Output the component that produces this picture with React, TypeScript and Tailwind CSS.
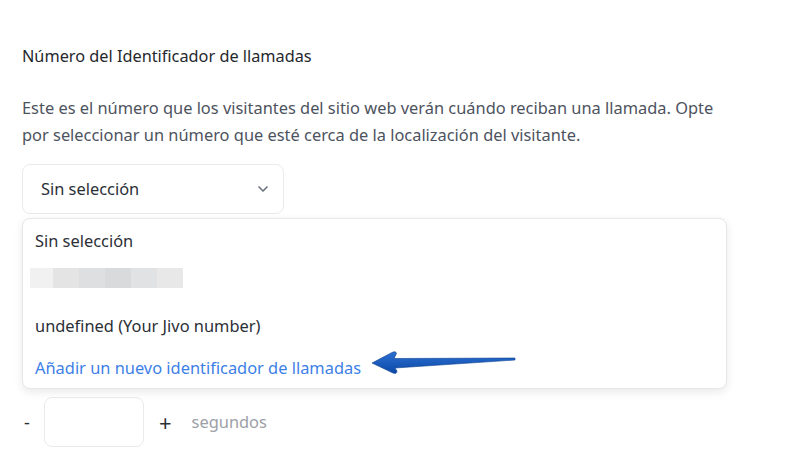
import { ChevronDown } from 'lucide-react';

// ─── Blue annotation arrow ────────────────────────────────────────────────────

function PointerArrow() {
  return (
    <svg width="148" height="30" viewBox="0 0 148 30" className="absolute left-[370px] top-[348px]">
      <defs>
        <linearGradient id="arrowFill" x1="0" y1="0" x2="0" y2="1">
          <stop offset="0" stopColor="#2b70d2" />
          <stop offset="1" stopColor="#0c48a6" />
        </linearGradient>
      </defs>
      <path
        d="M2 15 L22 4.5 Q26 2.5 26.5 5.5 L24 10.5 L145 10 L145 12 L25 20 L27 23 Q27 26.5 23 25 Z"
        fill="url(#arrowFill)"
        stroke="#0b3f90"
        strokeWidth="0.6"
        strokeLinejoin="round"
      />
    </svg>
  );
}

// ─── Page ─────────────────────────────────────────────────────────────────────

export default function App() {
  return (
    <div className="relative w-[803px] h-[469px] bg-white overflow-hidden font-['Noto_Sans',sans-serif]">
      <div className="flex flex-col items-start pl-[22px] pt-[44px]">

        {/* Heading */}
        <p className="text-[16.3px] leading-[24px] text-[#25282d]">
          Número del Identificador de llamadas
        </p>

        {/* Description */}
        <p className="mt-[26px] w-[740px] text-[16.4px] leading-[27px] text-[#4d535e]">
          Este es el número que los visitantes del sitio web verán cuándo reciban una llamada. Opte
          <br />
          por seleccionar un número que esté cerca de la localización del visitante.
        </p>

        {/* Select */}
        <div className="mt-[16px] flex h-[50px] w-[262px] items-center justify-between rounded-[8px] border border-[#e9eaec] pl-[18px] pr-[12px]">
          <span className="text-[16.4px] text-[#2b2f36]">Sin selección</span>
          <ChevronDown className="h-[16px] w-[16px] text-[#6b7280]" strokeWidth={2.5} />
        </div>

        {/* Dropdown */}
        <div className="mt-[4px] flex h-[171px] w-[705px] flex-col rounded-[8px] border border-[#e6e7e9] bg-white pl-[12px] pt-[11px] shadow-[0_3px_10px_rgba(0,0,0,0.09)]">
          <span className="text-[16.4px] leading-[22px] text-[#2b2f36]">Sin selección</span>
          <div className="mt-[16px] flex h-[20px] w-[153px] -ml-[5px]">
            <div className="w-[23px] bg-[#f1f1f2]" />
            <div className="w-[26px] bg-[#e4e4e5]" />
            <div className="w-[26px] bg-[#dedfe0]" />
            <div className="w-[26px] bg-[#d9dadb]" />
            <div className="w-[26px] bg-[#e1e2e3]" />
            <div className="w-[26px] bg-[#e8e8e9]" />
          </div>
          <span className="mt-[27px] text-[16.4px] leading-[22px] text-[#2b2f36]">undefined (Your Jivo number)</span>
          <span className="mt-[20px] text-[16.4px] leading-[22px] text-[#3d7fe6]">Añadir un nuevo identificador de llamadas</span>
        </div>

        {/* Stepper */}
        <div className="mt-[8px] flex items-center">
          <span className="w-[22px] pl-[2px] text-[18px] text-[#2b2f36]">-</span>
          <div className="h-[50px] w-[100px] rounded-[8px] border border-[#e9eaec]" />
          <span className="ml-[15px] text-[22px] leading-none text-[#2b2f36]">+</span>
          <span className="ml-[20px] text-[16.4px] text-[#9ca0a8]">segundos</span>
        </div>
      </div>

      <PointerArrow />
    </div>
  );
}
